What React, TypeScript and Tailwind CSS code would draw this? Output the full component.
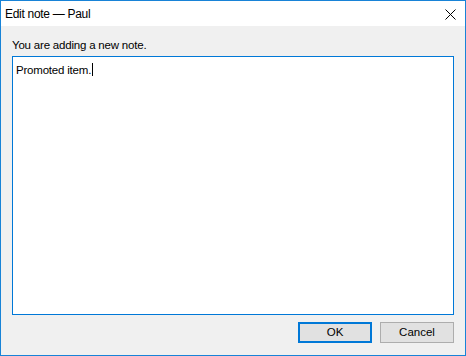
import React from 'react';

/**
 * 编辑备注对话框
 */
const font = { fontFamily: '"Liberation Sans", Arial, sans-serif' };

export default function App() {
  return (
    <div
      className="w-[466px] h-[356px] border border-[#1883d7] flex flex-col bg-[#f0f0f0] text-[11.5px] text-black"
      style={font}
    >
      {/* 标题栏 */}
      <div className="h-[25px] bg-white flex items-center justify-between pl-[4px] pr-[9px]">
        <span className="leading-none text-[12px] tracking-[-0.3px]">Edit note — Paul</span>
        <svg width="11" height="11" viewBox="0 0 11 11" className="mt-[1px]">
          <path d="M0.5 0.5L10.5 10.5M10.5 0.5L0.5 10.5" stroke="#000" strokeWidth="1" />
        </svg>
      </div>

      {/* 内容 */}
      <div className="flex-1 flex flex-col px-[11px] pb-[12px]">
        <div className="h-[30px] flex items-end pb-[5px] leading-none tracking-[-0.2px]">You are adding a new note.</div>
        <div className="h-[259px] border border-[#0078d7] bg-white px-[3px] pt-[5px]">
          <span className="leading-none tracking-[-0.2px]">Promoted item.</span>
          <span className="inline-block w-px h-[13px] bg-black align-[-2px] ml-px" />
        </div>
        <div className="flex justify-end gap-[8px] mt-[7px]">
          <button className="w-[74px] h-[21px] border-2 border-[#0078d7] bg-[#e1e1e1] leading-none">OK</button>
          <button className="w-[74px] h-[21px] border border-[#adadad] bg-[#e1e1e1] leading-none">Cancel</button>
        </div>
      </div>
    </div>
  );
}
